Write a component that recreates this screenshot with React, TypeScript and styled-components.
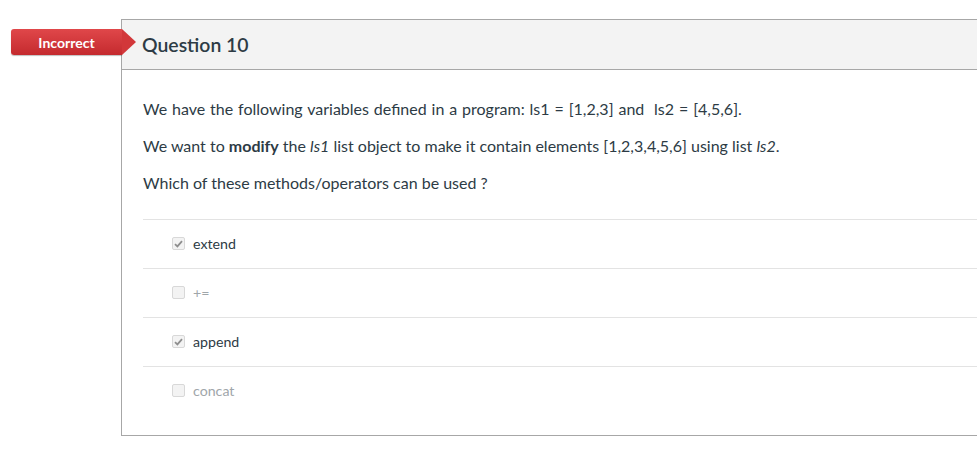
import { FC } from "react";
import styled, { createGlobalStyle } from "styled-components";

const GlobalStyle = createGlobalStyle`
  body {
    margin: 0;
    background: #ffffff;
    font-family: Lato, "Open Sans", sans-serif;
    color: #2d3b45;
    overflow: hidden;
  }
`;

interface Answer {
  label: string;
  checked: boolean;
}

const answers: Answer[] = [
  { label: "extend", checked: true },
  { label: "+=", checked: false },
  { label: "append", checked: true },
  { label: "concat", checked: false },
];

const Page = styled.div`
  position: relative;
  padding: 19px 0 0 121px;
`;

const Badge = styled.div`
  position: absolute;
  left: 11px;
  top: 29px;
  height: 26px;
  width: 111px;
  background: linear-gradient(#e0474a, #c42a2e);
  border-radius: 3px 0 0 3px;
  color: #ffffff;
  font-weight: 700;
  font-size: 14px;
  display: flex;
  align-items: center;
  justify-content: center;
  box-shadow: 0 1px 1px rgba(0, 0, 0, 0.25);
  &::after {
    content: "";
    position: absolute;
    right: -14px;
    top: 0;
    border-top: 13px solid transparent;
    border-bottom: 13px solid transparent;
    border-left: 14px solid #d2373a;
  }
`;

const Card = styled.div`
  width: 880px;
  border: 1px solid #a7a7a7;
  border-right: none;
`;

const Header = styled.div`
  height: 49px;
  background: #f3f3f3;
  border-bottom: 1px solid #a7a7a7;
  display: flex;
  align-items: center;
  padding-left: 20px;
  font-size: 19.4px;
  font-weight: 600;
`;

const Body = styled.div`
  padding: 28px 0 20px 21px;
`;

const Text = styled.p<{ $wide?: boolean }>`
  margin: 0 0 15px;
  font-size: 16px;
  line-height: 22px;
  word-spacing: ${(p) => (p.$wide ? "0.8px" : "0")};
`;

const Answers = styled.div`
  margin-top: 25px;
`;

const Row = styled.div<{ $checked: boolean }>`
  height: 47px;
  padding-bottom: 1px;
  border-top: 1px solid #e3e3e3;
  display: flex;
  align-items: center;
  padding-left: 29px;
  font-size: 14.2px;
  color: ${(p) => (p.$checked ? "#2d3b45" : "#a0a6aa")};
`;

const Box = styled.span`
  width: 11px;
  height: 11px;
  border: 1px solid #d8d8d8;
  border-radius: 2px;
  background: #f3f3f3;
  margin-right: 8px;
  display: flex;
  align-items: center;
  justify-content: center;
`;

const Check: FC = () => (
  <svg width="9" height="8" viewBox="0 0 9 8">
    <path d="M1 4.2 L3.4 6.4 L8 1.2" fill="none" stroke="#8e8e8e" strokeWidth="1.8" />
  </svg>
);

export default function App() {
  return (
    <Page>
      <GlobalStyle />
      <Badge>Incorrect</Badge>
      <Card>
        <Header>Question 10</Header>
        <Body>
          <Text $wide>
            We have the following variables defined in a program: ls1 = [1,2,3] and&nbsp; ls2 = [4,5,6].
          </Text>
          <Text>
            We want to <b>modify</b> the <i>ls1</i> list object to make it contain elements [1,2,3,4,5,6] using list <i>ls2</i>.
          </Text>
          <Text>Which of these methods/operators can be used ?</Text>
          <Answers>
            {answers.map((a) => (
              <Row key={a.label} $checked={a.checked}>
                <Box>{a.checked && <Check />}</Box>
                {a.label}
              </Row>
            ))}
          </Answers>
        </Body>
      </Card>
    </Page>
  );
}
